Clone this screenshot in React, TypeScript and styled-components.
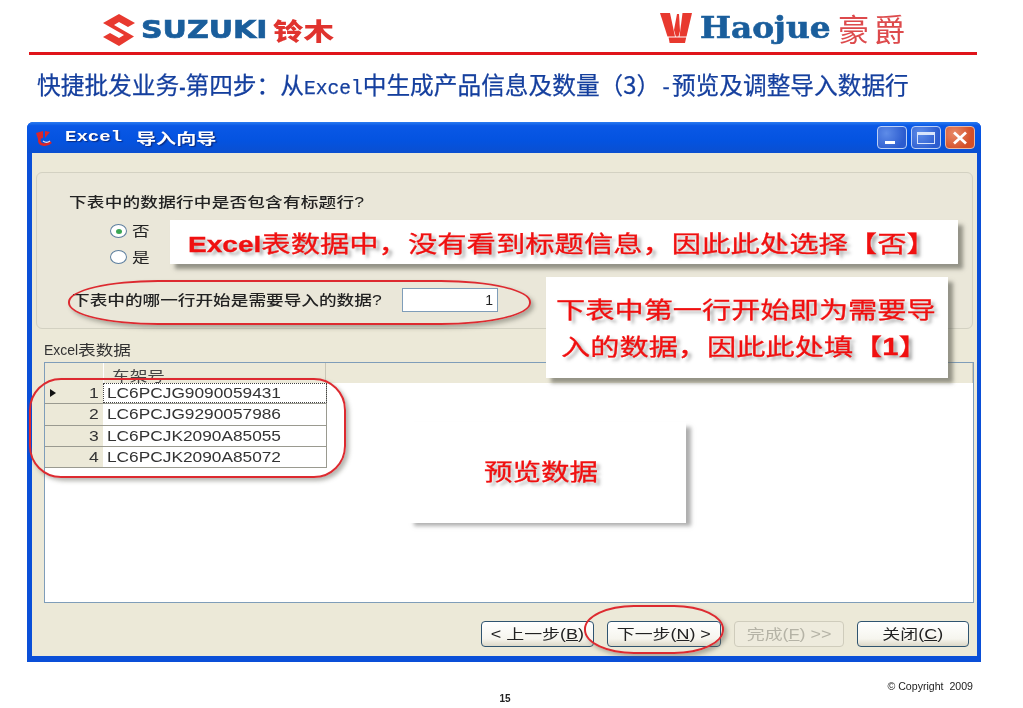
import { FC } from 'react';
import styled, { createGlobalStyle } from 'styled-components';

const rows = [
  { no: 1, vin: 'LC6PCJG9090059431' },
  { no: 2, vin: 'LC6PCJG9290057986' },
  { no: 3, vin: 'LC6PCJK2090A85055' },
  { no: 4, vin: 'LC6PCJK2090A85072' },
];

const GlobalStyle = createGlobalStyle`
  html, body { margin: 0; padding: 0; background: #fff; }
  body { font-family: "Liberation Sans", "Noto Sans CJK SC", sans-serif; }
`;

const App: FC = () => (
  <Page>
    <GlobalStyle />
    <LogoBar>
      <Suzuki>
        <svg width="32" height="33" viewBox="0 0 32 33">
          <path d="M16 1 L32 10 L25 14 L16 9 L11 12 L31 23.5 L16 33 L0 24 L7 20 L16 25 L21 22 L0 10 Z" fill="#e8392f" />
        </svg>
        <SuzukiWord>SUZUKI</SuzukiWord>
        <SuzukiCn>铃木</SuzukiCn>
      </Suzuki>
      <Haojue>
        <svg width="32" height="30" viewBox="0 0 32 30">
          <path d="M0 0 H10 L15 23.5 H7.5 Z" fill="#e8392f" />
          <path d="M14 17 L17 1 H19 L20 18 L18.5 23.5 H15.8 Z" fill="#e8392f" />
          <path d="M22.5 0 H32 L26.5 23.5 H19.5 Z" fill="#e8392f" />
          <path d="M8.6 24.6 H26.2 L25 30 H9.6 Z" fill="#e8392f" />
        </svg>
        <HaojueWord>Haojue</HaojueWord>
        <HaojueCn>豪爵</HaojueCn>
      </Haojue>
    </LogoBar>
    <Rule />
    <SlideTitle>
      快捷批发业务<Dash>-</Dash>第四步：从<Latin>Excel</Latin>中生成产品信息及数量（3）<Latin>-</Latin>预览及调整导入数据行
    </SlideTitle>

    <XpWindow>
      <TitleBar>
        <AppIcon viewBox="0 0 18 18" width="18" height="18">
          <path d="M1 4 L8 2 L8 9 L3 10 Z M10 2 L15 3 L10 9 Z" fill="#d8262c" />
          <path d="M6 7 C3 11 4 15 8 15.5 C11 16 14 15 16 13" fill="none" stroke="#d8262c" strokeWidth="2.6" />
          <path d="M8 12 C10 13.5 13 13.5 15 12" fill="none" stroke="#e9e4f0" strokeWidth="1.2" />
        </AppIcon>
        <WindowTitle>
          <TitleLatin>Excel</TitleLatin>
          <TitleCn>导入向导</TitleCn>
        </WindowTitle>
        <Controls>
          <Control>
            <MinGlyph />
          </Control>
          <Control>
            <MaxGlyph />
          </Control>
          <Control $close>
            <svg width="18" height="18" viewBox="0 0 18 18">
              <path d="M3 3.5 L15 14.5 M15 3.5 L3 14.5" stroke="#fff" strokeWidth="2.8" />
            </svg>
          </Control>
        </Controls>
      </TitleBar>

      <Client>
        <GroupBox>
          <Question>
            <Stretch>下表中的数据行中是否包含有标题行?</Stretch>
          </Question>
          <RadioList>
            <RadioRow>
              <Radio $checked />
              <Stretch>否</Stretch>
            </RadioRow>
            <RadioRow>
              <Radio />
              <Stretch>是</Stretch>
            </RadioRow>
          </RadioList>
          <StartRow>
            <StartLabel>
              <Stretch>下表中的哪一行开始是需要导入的数据?</Stretch>
            </StartLabel>
            <NumberBox>1</NumberBox>
          </StartRow>
        </GroupBox>

        <GridLabel>
          Excel<Stretch>表数据</Stretch>
        </GridLabel>
        <Grid>
          <GridHead>
            <HeadCorner />
            <HeadCell>
              <Stretch>车架号</Stretch>
            </HeadCell>
            <HeadRest />
          </GridHead>
          {rows.map(row => (
            <GridRow key={row.no}>
              <RowHeader>
                {row.no === 1 && <RowMarker />}
                <RowNo>{row.no}</RowNo>
              </RowHeader>
              <VinCell $focused={row.no === 1}>
                <VinText>{row.vin}</VinText>
              </VinCell>
            </GridRow>
          ))}
        </Grid>

        <ButtonBar>
          <WizardButton $w={113}>
            <ButtonText>&lt; 上一步(<u>B</u>)</ButtonText>
          </WizardButton>
          <WizardButton $w={114}>
            <ButtonText>下一步(<u>N</u>) &gt;</ButtonText>
          </WizardButton>
          <WizardButton $w={110} $disabled>
            <ButtonText>完成(<u>F</u>) &gt;&gt;</ButtonText>
          </WizardButton>
          <WizardButton $w={112}>
            <ButtonText>关闭(<u>C</u>)</ButtonText>
          </WizardButton>
        </ButtonBar>
      </Client>
    </XpWindow>

    <Footer>
      <span />
      <PageNo>15</PageNo>
      <Copyright>© Copyright&nbsp; 2009</Copyright>
    </Footer>

    <CalloutTop>
      <CalloutInk $sx={1.275}>
        <CalloutLatin>Excel</CalloutLatin>表数据中，没有看到标题信息，因此此处选择【否】
      </CalloutInk>
    </CalloutTop>
    <CalloutSide>
      <CalloutInk $sx={1.27}>下表中第一行开始即为需要导</CalloutInk>
      <CalloutInk $sx={1.27} $indent={5}>
        入的数据，因此此处填【<CalloutLatin>1</CalloutLatin>】
      </CalloutInk>
    </CalloutSide>
    <CalloutPreview>
      <CalloutInk $sx={1.24}>预览数据</CalloutInk>
    </CalloutPreview>

    <RingStart />
    <RingRows />
    <RingNext />
  </Page>
);

export default App;

const Page = styled.div`
  position: relative;
  width: 1023px;
  height: 708px;
  overflow: hidden;
  background: #fff;
  filter: blur(0.4px);
`;

/* ---- slide header ---- */

const LogoBar = styled.div`
  display: flex;
  height: 52px;
  box-sizing: border-box;
  padding-top: 13px;
`;

const Suzuki = styled.div`
  display: flex;
  align-items: flex-start;
  margin-left: 103px;
  width: 557px;
`;

const SuzukiWord = styled.span`
  display: inline-block;
  width: 132px;
  margin: 2px 0 0 6px;
  font: 700 25px/30px "DejaVu Sans", sans-serif;
  color: #1a5e9c;
  -webkit-text-stroke: 0.7px #1a5e9c;
  transform: scaleX(1.2);
  transform-origin: left center;
`;

const SuzukiCn = styled.span`
  display: inline-block;
  font: 900 24px/30px "Noto Sans CJK SC", sans-serif;
  color: #e0332e;
  transform: scaleX(1.27);
  transform-origin: left center;
  margin-top: 2px;
`;

const Haojue = styled.div`
  display: flex;
  align-items: flex-start;
`;

const HaojueWord = styled.span`
  display: inline-block;
  width: 138px;
  margin-left: 8px;
  font: 700 29px/30px "DejaVu Serif", serif;
  color: #1a5e9c;
  -webkit-text-stroke: 0.6px #1a5e9c;
  transform: scaleX(1.13);
  transform-origin: left center;
`;

const HaojueCn = styled.span`
  font: 400 31px/30px "Noto Sans CJK SC", sans-serif;
  color: #dd4a4c;
  letter-spacing: 5px;
`;

const Rule = styled.div`
  width: 948px;
  height: 3px;
  margin-left: 29px;
  background: #e0141a;
`;

const SlideTitle = styled.h1`
  height: 67px;
  margin: 0 0 0 37px;
  padding-top: 14px;
  box-sizing: border-box;
  font: 400 23.7px/30px "Noto Sans CJK SC", sans-serif;
  -webkit-text-stroke: 0.25px #153f9e;
  color: #153f9e;
  white-space: nowrap;
`;

const Latin = styled.span`
  font: 400 19.6px/30px "Liberation Mono", monospace;
`;

const Dash = styled.span`
  font: 700 19px/30px "Liberation Sans", sans-serif;
`;

/* ---- xp window ---- */

const XpWindow = styled.div`
  display: flex;
  flex-direction: column;
  width: 954px;
  height: 540px;
  margin-left: 27px;
  box-sizing: border-box;
  padding: 0 4px 6px 5px;
  background: #0a4fd8;
  border-radius: 6px 6px 0 0;
`;

const TitleBar = styled.div`
  display: flex;
  align-items: center;
  height: 31px;
  flex: none;
  margin: 0 -4px 0 -5px;
  padding: 0 6px 0 8px;
  background: linear-gradient(#2a7cf0 0, #0a58e6 12%, #0453e0 60%, #0a4fd0 100%);
  border-radius: 6px 6px 0 0;
`;

const AppIcon = styled.svg`
  flex: none;
`;

const WindowTitle = styled.div`
  display: flex;
  flex: 1;
  margin-left: 12px;
  color: #fff;
  text-shadow: 1px 1px 1px #0a2a80;
`;

const TitleLatin = styled.span`
  display: inline-block;
  width: 71px;
  font: 700 15px/20px "Liberation Mono", monospace;
  transform: scaleX(1.27);
  transform-origin: left center;
`;

const TitleCn = styled.span`
  display: inline-block;
  font: 700 15px/20px "Noto Sans CJK SC", sans-serif;
  transform: scaleX(1.34);
  transform-origin: left center;
  white-space: nowrap;
`;

const Controls = styled.div`
  display: flex;
  gap: 4px;
`;

const Control = styled.div<{ $close?: boolean }>`
  display: flex;
  align-items: center;
  justify-content: center;
  width: 30px;
  height: 23px;
  box-sizing: border-box;
  border: 1.5px solid ${p => (p.$close ? '#e8b8a4' : '#bcd0f5')};
  border-radius: 4px;
  background: ${p =>
    p.$close
      ? 'radial-gradient(circle at 30% 30%, #e88a68, #d44f28 70%)'
      : 'radial-gradient(circle at 30% 30%, #5e8ce8, #2c5ccf 75%)'};
`;

const MinGlyph = styled.div`
  width: 10px;
  height: 3px;
  margin: 9px 5px 0 0;
  background: #fff;
`;

const MaxGlyph = styled.div`
  width: 18px;
  height: 12px;
  box-sizing: border-box;
  border: 1.5px solid #d8e4fb;
  border-top-width: 3px;
`;

const Client = styled.div`
  display: flex;
  flex-direction: column;
  flex: 1;
  background: #ece9d8;
  padding: 19px 4px 0 4px;
  color: #222;
`;

const Stretch = styled.span`
  display: inline-block;
  font-size: 14px;
  line-height: 18px;
  transform: scaleX(1.26);
  transform-origin: left center;
  white-space: nowrap;
`;

const GroupBox = styled.div`
  height: 157px;
  box-sizing: border-box;
  width: 937px;
  padding: 20px 0 0 32px;
  background: #eae7d9;
  border: 1px solid #d3d1c2;
  border-radius: 6px;
`;

const Question = styled.div`
  height: 18px;
  & > span { font-weight: 500; letter-spacing: 0.15px; }
`;

const RadioList = styled.div`
  display: flex;
  flex-direction: column;
  gap: 8px;
  margin: 11px 0 0 41px;
`;

const RadioRow = styled.div`
  display: flex;
  align-items: center;
  gap: 5px;
  height: 18px;
`;

const Radio = styled.span<{ $checked?: boolean }>`
  display: flex;
  align-items: center;
  justify-content: center;
  width: 17px;
  height: 14px;
  box-sizing: border-box;
  border: 1px solid #5d7f9f;
  border-radius: 50%;
  background: #fff;
  &::after {
    content: '';
    display: ${p => (p.$checked ? 'block' : 'none')};
    width: 6px;
    height: 5px;
    border-radius: 50%;
    background: #3aa655;
  }
`;

const StartRow = styled.div`
  display: flex;
  align-items: center;
  margin-top: 22px;
`;

const StartLabel = styled.div`
  width: 329px;
  margin-left: 4px;
  & > span { margin-left: -1px; font-weight: 500; }
`;

const NumberBox = styled.div`
  width: 96px;
  height: 24px;
  box-sizing: border-box;
  padding-right: 4px;
  background: #fff;
  border: 1px solid #7f9db9;
  font: 400 14px/22px "Liberation Sans", sans-serif;
  text-align: right;
  color: #222;
`;

const GridLabel = styled.div`
  height: 33px;
  box-sizing: border-box;
  margin: 0 0 0 8px;
  padding-top: 12px;
  font-size: 14px;
  line-height: 18px;
  color: #333;
  display: flex;
  align-items: flex-start;
`;

const Grid = styled.div`
  width: 930px;
  height: 241px;
  margin-left: 8px;
  box-sizing: border-box;
  border: 1px solid #7f9db9;
  background: #fff;
  overflow: hidden;
`;

const GridHead = styled.div`
  display: flex;
  height: 20px;
  background: #ece9d8;
  overflow: hidden;
`;

const HeadCorner = styled.div`
  width: 58px;
  border-right: 1px solid #fff;
`;

const HeadCell = styled.div`
  width: 222px;
  padding: 4px 0 0 8px;
  box-sizing: border-box;
  color: #444;
  border-right: 1px solid #c9c6b6;
`;

const HeadRest = styled.div`
  flex: 1;
  border-right: 1px solid #c9c6b6;
`;

const GridRow = styled.div`
  display: flex;
  height: 21.3px;
  width: 282px;
  box-sizing: border-box;
  border-bottom: 1px solid #9a9a90;
`;

const RowHeader = styled.div`
  display: flex;
  align-items: center;
  width: 58px;
  box-sizing: border-box;
  background: #ece9d8;
  padding: 0 5px 0 5px;
`;

const RowMarker = styled.span`
  width: 0;
  height: 0;
  border-top: 4.5px solid transparent;
  border-bottom: 4.5px solid transparent;
  border-left: 6px solid #111;
`;

const RowNo = styled.span`
  margin-left: auto;
  font-size: 14px;
  color: #333;
  transform: scaleX(1.25);
`;

const VinCell = styled.div<{ $focused?: boolean }>`
  flex: 1;
  box-sizing: border-box;
  padding-left: 4px;
  display: flex;
  align-items: center;
  border-right: 1px solid #9a9a90;
  outline: ${p => (p.$focused ? '1px dotted #444' : 'none')};
  outline-offset: -1px;
`;

const VinText = styled.span`
  display: inline-block;
  font-size: 14px;
  color: #333;
  transform: scaleX(1.235);
  transform-origin: left center;
  white-space: nowrap;
`;

const ButtonBar = styled.div`
  display: flex;
  justify-content: flex-end;
  gap: 13px;
  margin-top: 18px;
  padding-right: 4px;
`;

const WizardButton = styled.button<{ $w: number; $disabled?: boolean }>`
  width: ${p => p.$w}px;
  height: 26px;
  padding: 0;
  display: flex;
  align-items: center;
  justify-content: center;
  border: 1px solid ${p => (p.$disabled ? '#cfccbc' : '#2f5470')};
  border-radius: 4px;
  background: ${p => (p.$disabled ? '#eeebdd' : 'linear-gradient(#fff, #f6f5ee 70%, #dcd8c8)')};
  color: ${p => (p.$disabled ? '#b5b3a6' : '#222')};
  font-family: inherit;
`;

const ButtonText = styled.span`
  display: inline-block;
  font-size: 14px;
  line-height: 18px;
  transform: scaleX(1.28);
  white-space: nowrap;
`;

/* ---- footer ---- */

const Footer = styled.div`
  display: grid;
  grid-template-columns: 1fr auto 1fr;
  padding: 18px 50px 0 0;
  color: #222;
`;

const PageNo = styled.b`
  margin-top: 13px;
  margin-left: 37px;
  font-size: 10px;
  line-height: 12px;
`;

const Copyright = styled.span`
  justify-self: end;
  font-size: 10.6px;
  line-height: 12px;
`;

/* ---- annotations lying over the dialog ---- */

const CalloutInk = styled.div<{ $sx: number; $indent?: number }>`
  display: inline-block;
  margin-left: ${p => p.$indent ?? 0}px;
  font: 400 23px/36px "Noto Sans CJK SC", sans-serif;
  color: #f01010;
  -webkit-text-stroke: 0.3px #f01010;
  text-shadow: 3px 3px 3px rgba(70, 70, 70, 0.45);
  white-space: nowrap;
  transform: scaleX(${p => p.$sx});
  transform-origin: left center;
`;

const CalloutLatin = styled.span`
  font-family: "Liberation Sans", sans-serif;
  font-weight: 700;
`;

const CalloutBase = styled.div`
  position: absolute;
  display: flex;
  background: #fff;
  box-shadow: 5px 5px 4px rgba(90, 90, 80, 0.6);
`;

const CalloutTop = styled(CalloutBase)`
  left: 170px;
  top: 220px;
  width: 788px;
  height: 44px;
  padding: 4px 0 0 18px;
  box-sizing: border-box;
  & ${CalloutLatin} { font-size: 22px; }
`;

const CalloutSide = styled(CalloutBase)`
  left: 546px;
  top: 277px;
  width: 402px;
  height: 101px;
  flex-direction: column;
  align-items: flex-start;
  gap: 1px;
  padding: 13px 0 0 10px;
  box-sizing: border-box;
`;

const CalloutPreview = styled(CalloutBase)`
  left: 407px;
  top: 422px;
  width: 279px;
  height: 101px;
  padding: 30px 0 0 77px;
  box-sizing: border-box;
  box-shadow: 6px 4px 4px -1px rgba(120, 120, 120, 0.6);
`;

const RingBase = styled.div`
  position: absolute;
  box-sizing: border-box;
  border: 2px solid #dd2a30;
  box-shadow: 3px 3px 4px rgba(90, 90, 80, 0.45);
`;

const RingStart = styled(RingBase)`
  left: 68px;
  top: 280px;
  width: 463px;
  height: 45px;
  border-radius: 90px / 22px;
`;

const RingRows = styled(RingBase)`
  left: 29px;
  top: 378px;
  width: 317px;
  height: 100px;
  border-radius: 32px;
`;

const RingNext = styled(RingBase)`
  left: 584px;
  top: 605px;
  width: 140px;
  height: 49px;
  border-radius: 50px / 24px;
`;
